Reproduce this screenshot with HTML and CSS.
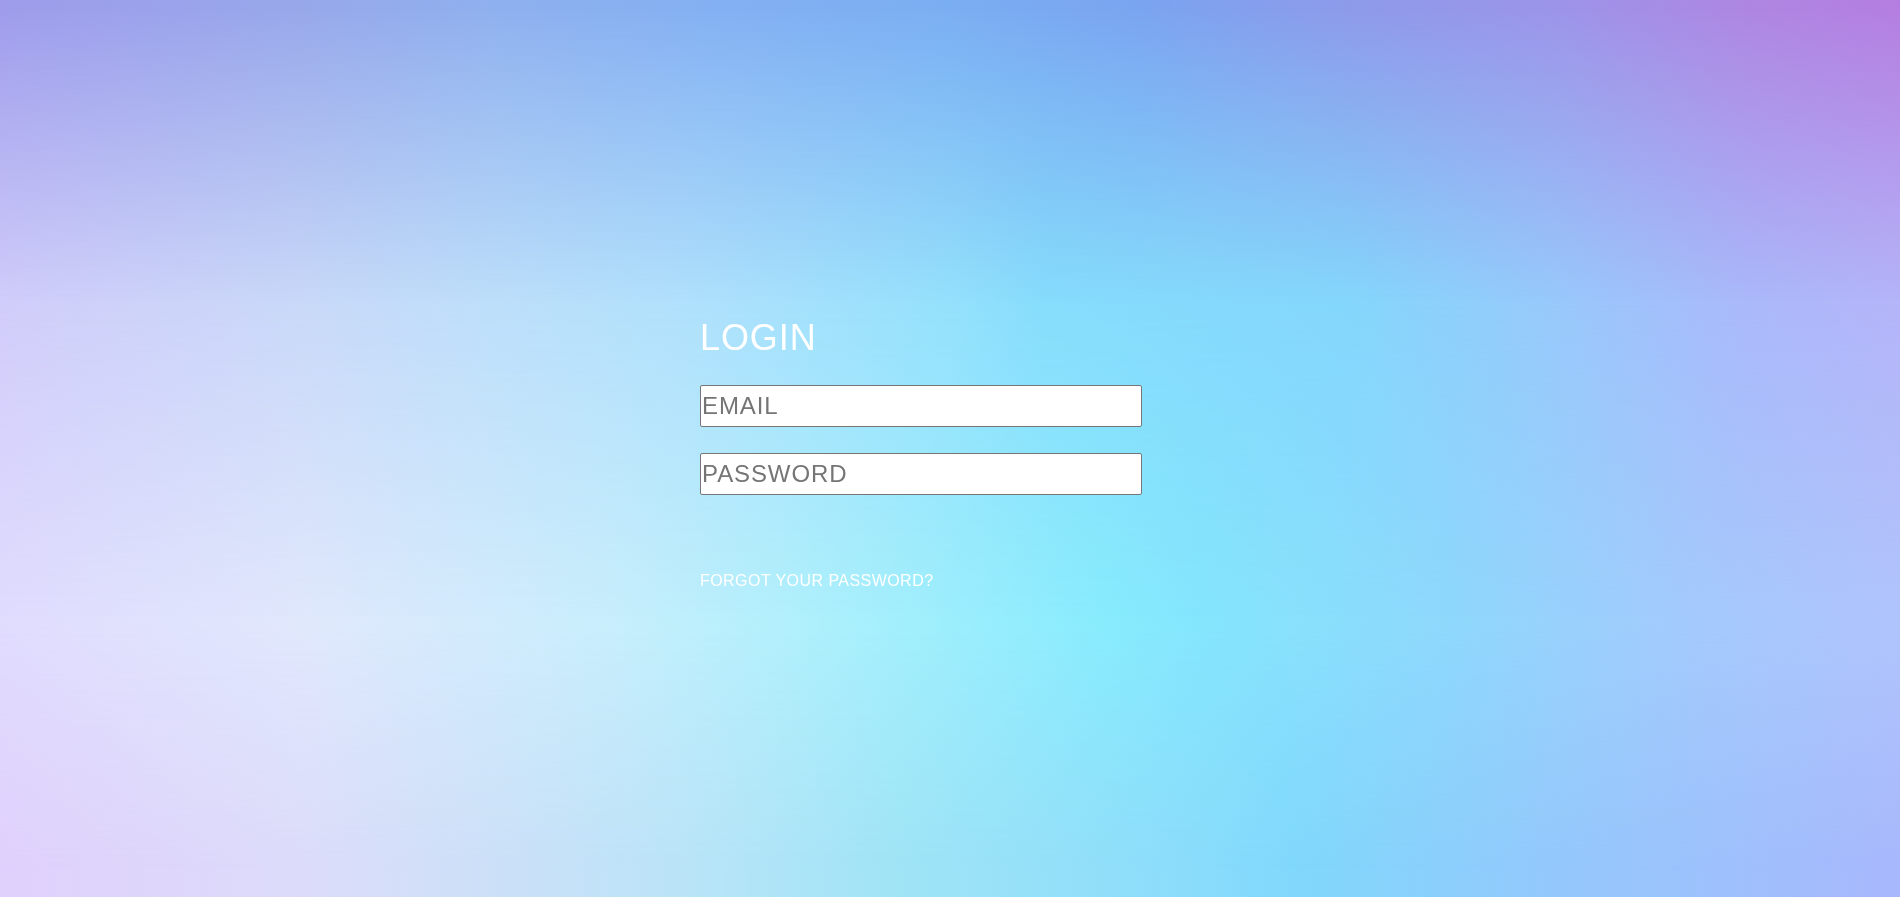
FILE: index.html
```html
<!DOCTYPE html>
<html lang="en">
<head>
<meta charset="utf-8">
<title>Login</title>
<link rel="stylesheet" href="styles.css">
</head>
<body>
<main class="page">
  <form class="login">
    <h1 class="login-title">LOGIN</h1>
    <input class="field field-email" type="email" placeholder="EMAIL">
    <input class="field field-password" type="password" placeholder="PASSWORD">
    <a class="forgot" href="#">FORGOT YOUR PASSWORD?</a>
  </form>
</main>
</body>
</html>
```
FILE: styles.css
```css
html {
  background: linear-gradient(to right, #e0d0fc 0%, #dcdcfa 16%, #cce0f8 26%, #b8e4f8 37%, #a0e4f6 47%, #8adcfb 63%, #80d8fc 68%, #94c8fc 82%, #a8b8fc 100%);
  min-height: 100%;
}

body {
  margin: 0;
  min-height: 100vh;
  font-family: "Liberation Sans", Arial, sans-serif;
}

body::before,
body::after,
.page::before {
  content: "";
  position: fixed;
  inset: 0;
  pointer-events: none;
}

body::before {
  z-index: -3;
  background: linear-gradient(to right, #e0dcfe 0%, #e0e8fc 16%, #c8eefc 32%, #b0f0fc 42%, #88ecfd 58%, #84e6fd 63%, #8ed8fc 76%, #a4cafc 89%, #b0c4fc 100%);
  -webkit-mask-image: linear-gradient(to bottom, #000 69%, transparent 97%);
  mask-image: linear-gradient(to bottom, #000 69%, transparent 97%);
}

body::after {
  z-index: -2;
  background: linear-gradient(to right, #d0ccfa 0%, #c8d8f8 16%, #bcdefa 26%, #aee0fc 37%, #94e0fc 50%, #86dcfc 55%, #84d6fc 71%, #98c8fb 82%, #aab8fa 92%, #b4b4f8 100%);
  -webkit-mask-image: linear-gradient(to bottom, #000 33.4%, transparent 69%);
  mask-image: linear-gradient(to bottom, #000 33.4%, transparent 69%);
}

.page::before {
  z-index: -1;
  background: linear-gradient(to right, #9e9ceb 0%, #97a8ea 16%, #8fb0ee 26%, #84b0f2 37%, #7aaef2 50%, #7aa4f0 60%, #8d9aea 71%, #9c94e8 82%, #ae86e2 92%, #b47ee0 100%);
  -webkit-mask-image: linear-gradient(to bottom, #000 1%, transparent 33.4%);
  mask-image: linear-gradient(to bottom, #000 1%, transparent 33.4%);
}

.page {
  min-height: 100vh;
}

.login {
  width: 500px;
  margin: 0 auto;
  padding-top: 318px;
  display: flex;
  flex-direction: column;
  align-items: flex-start;
}

.login-title {
  margin: 0;
  font-size: 36px;
  line-height: 40px;
  font-weight: normal;
  letter-spacing: 0.9px;
  color: #fff;
}

.field {
  box-sizing: border-box;
  width: 442px;
  height: 42px;
  margin: 27px 0 0;
  padding: 0 1px;
  border: 1px solid #767676;
  border-radius: 2px;
  background: #fff;
  font-family: "Liberation Sans", Arial, sans-serif;
  font-size: 24px;
  letter-spacing: 0.9px;
  color: #333;
}

.field-password {
  margin-top: 26px;
}

.field::placeholder {
  color: #757575;
  opacity: 1;
}

.forgot {
  margin-top: 77px;
  font-size: 16px;
  line-height: 18px;
  letter-spacing: 0.45px;
  color: #fff;
  text-decoration: none;
}
```
